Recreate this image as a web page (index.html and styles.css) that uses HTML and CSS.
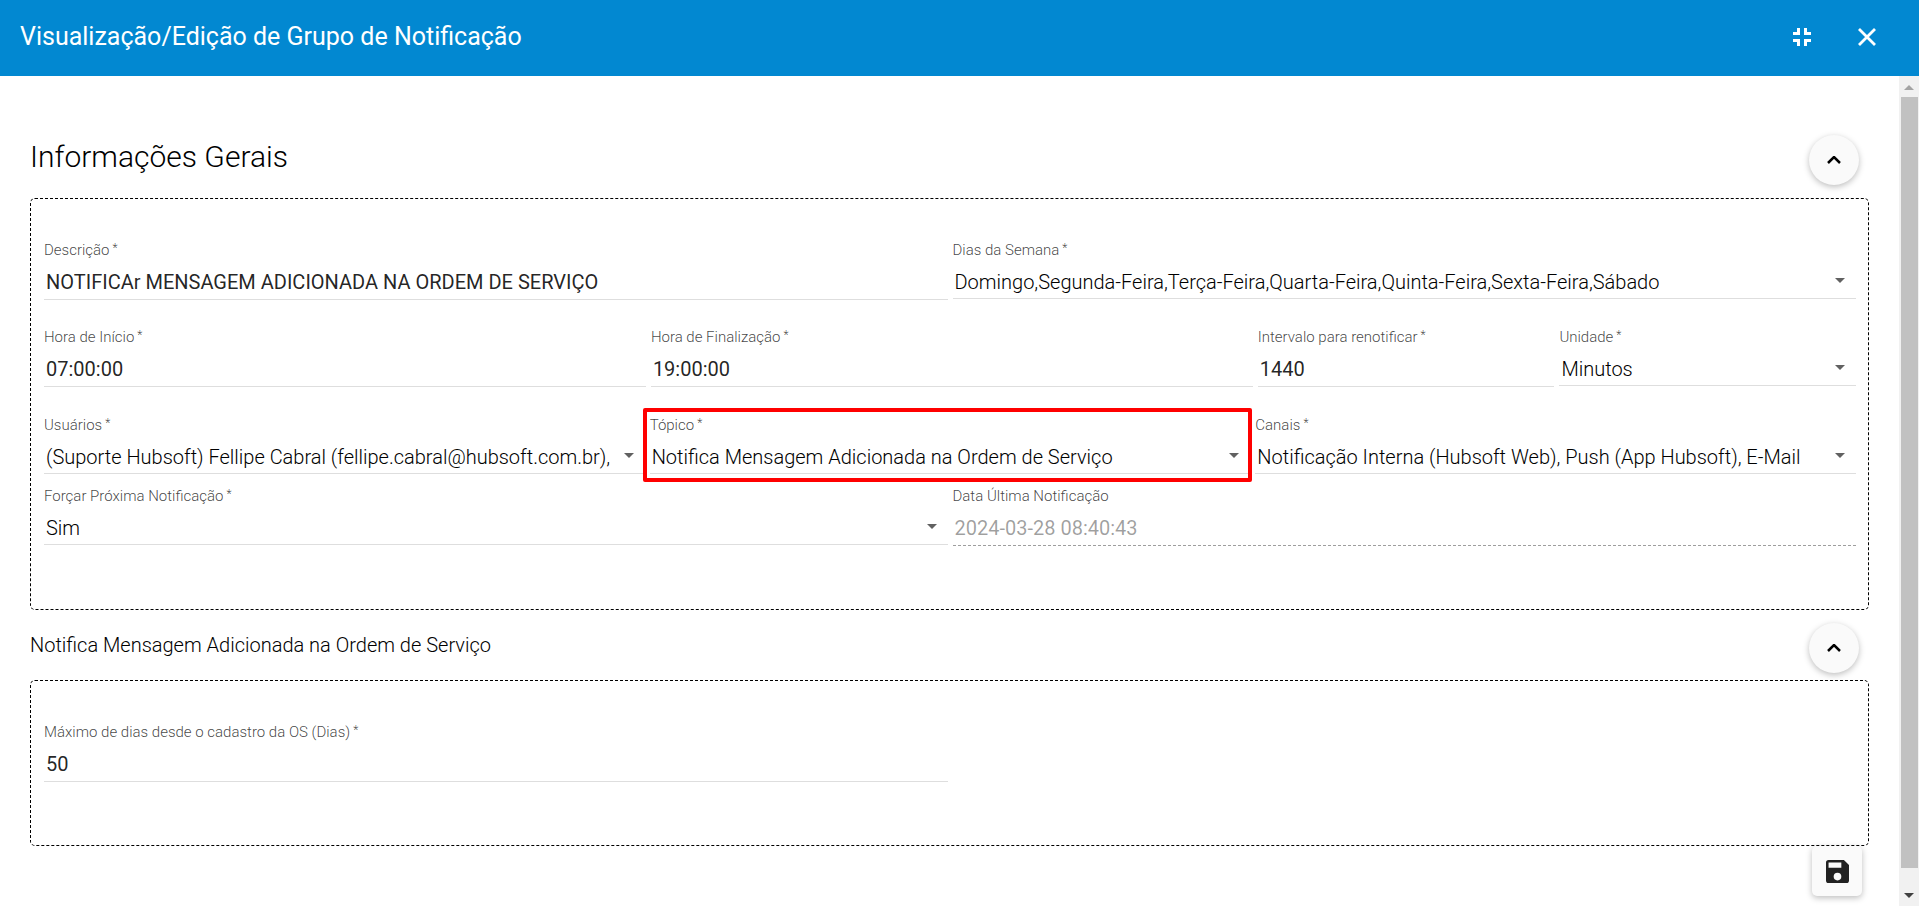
FILE: index.html
```html
<!DOCTYPE html>
<html lang="pt-BR">
<head>
    <meta charset="UTF-8">
    <meta name="viewport" content="width=device-width, initial-scale=1.0">
    <title>Visualização/Edição de Grupo de Notificação</title>

    <link rel="stylesheet" href="styles.css">
</head>
<body>
    <header class="toolbar">
        <h1 class="toolbar-title">Visualização/Edição de Grupo de Notificação</h1>
        <button type="button" class="icon-button" aria-label="Sair da tela cheia">
            <svg viewBox="0 0 18 18" width="18" height="18"><path d="M4 0h3v7H0V4h4zM11 0h3v4h4v3h-7zM0 11h7v7H4v-4H0zM11 11h7v3h-4v4h-3z" fill="#fff"/></svg>
        </button>
        <button type="button" class="icon-button" aria-label="Fechar">
            <svg viewBox="0 0 18 18" width="18" height="18"><path d="M1 1l16 16M17 1L1 17" stroke="#fff" stroke-width="2.8"/></svg>
        </button>
    </header>

    <div class="dialog">
        <form class="content">
            <div class="section-header">
                <h2 class="section-title large">Informações Gerais</h2>
                <button type="button" class="fab" aria-label="Recolher Informações Gerais">
                    <svg viewBox="0 0 14 8" width="14" height="8"><path d="M1 7l6-6 6 6" fill="none" stroke="#000" stroke-width="2.5"/></svg>
                </button>
            </div>

            <section class="panel">
                <div class="row halves">
                    <div class="field">
                        <label for="descricao">Descrição<sup>*</sup></label>
                        <input type="text" id="descricao" value="NOTIFICAr MENSAGEM ADICIONADA NA ORDEM DE SERVIÇO" required>
                    </div>
                    <div class="field">
                        <label for="dias">Dias da Semana<sup>*</sup></label>
                        <select id="dias"><option>Domingo,Segunda-Feira,Terça-Feira,Quarta-Feira,Quinta-Feira,Sexta-Feira,Sábado</option></select>
                    </div>
                </div>
                <div class="row hours">
                    <div class="field">
                        <label for="inicio">Hora de Início<sup>*</sup></label>
                        <input type="text" id="inicio" value="07:00:00" required>
                    </div>
                    <div class="field">
                        <label for="fim">Hora de Finalização<sup>*</sup></label>
                        <input type="text" id="fim" value="19:00:00" required>
                    </div>
                    <div class="field">
                        <label for="intervalo">Intervalo para renotificar<sup>*</sup></label>
                        <input type="text" id="intervalo" value="1440" required>
                    </div>
                    <div class="field">
                        <label for="unidade">Unidade<sup>*</sup></label>
                        <select id="unidade"><option>Minutos</option></select>
                    </div>
                </div>
                <div class="row thirds">
                    <div class="field">
                        <label for="usuarios">Usuários<sup>*</sup></label>
                        <select id="usuarios"><option>(Suporte Hubsoft) Fellipe Cabral (fellipe.cabral@hubsoft.com.br),</option></select>
                    </div>
                    <div class="field highlight">
                        <label for="topico">Tópico<sup>*</sup></label>
                        <select id="topico"><option>Notifica Mensagem Adicionada na Ordem de Serviço</option></select>
                    </div>
                    <div class="field">
                        <label for="canais">Canais<sup>*</sup></label>
                        <select id="canais"><option>Notificação Interna (Hubsoft Web), Push (App Hubsoft), E-Mail</option></select>
                    </div>
                </div>
                <div class="row halves">
                    <div class="field">
                        <label for="forcar">Forçar Próxima Notificação<sup>*</sup></label>
                        <select id="forcar"><option>Sim</option></select>
                    </div>
                    <div class="field">
                        <label for="ultima">Data Última Notificação</label>
                        <input type="text" id="ultima" value="2024-03-28 08:40:43" disabled>
                    </div>
                </div>
            </section>

            <div class="section-header compact">
                <h2 class="section-title">Notifica Mensagem Adicionada na Ordem de Serviço</h2>
                <button type="button" class="fab" aria-label="Recolher tópico">
                    <svg viewBox="0 0 14 8" width="14" height="8"><path d="M1 7l6-6 6 6" fill="none" stroke="#000" stroke-width="2.5"/></svg>
                </button>
            </div>

            <section class="panel">
                <div class="row halves">
                    <div class="field">
                        <label for="maximo">Máximo de dias desde o cadastro da OS (Dias)<sup>*</sup></label>
                        <input type="text" id="maximo" value="50" required>
                    </div>
                </div>
            </section>

            <div class="actions">
                <button type="submit" class="save-button" aria-label="Salvar">
                    <svg viewBox="3 3 18 18" width="23" height="23"><path d="M17 3H5a2 2 0 0 0-2 2v14a2 2 0 0 0 2 2h14a2 2 0 0 0 2-2V7zm-5 16a3 3 0 1 1 0-6 3 3 0 0 1 0 6zm3-10H5V5h10z" fill="#212121"/></svg>
                </button>
            </div>
        </form>

        <div class="scrollbar" aria-hidden="true">
            <svg viewBox="0 0 10 5" width="10" height="5"><path d="M0 5l5-5 5 5z" fill="#a3a3a3"/></svg>
            <div class="scrollbar-thumb"></div>
            <svg viewBox="0 0 10 5" width="10" height="5"><path d="M0 0l5 5 5-5z" fill="#404040"/></svg>
        </div>
    </div>
</body>
</html>
```

FILE: styles.css
```css
* {
    box-sizing: border-box;
}
body {
    margin: 0;
    height: 100vh;
    display: flex;
    flex-direction: column;
    font-family: Roboto, sans-serif;
    color: rgba(0, 0, 0, 0.87);
    background-color: #fff;
    overflow: hidden;
}
button {
    border: none;
    padding: 0;
    cursor: pointer;
    display: flex;
    align-items: center;
    justify-content: center;
}
.toolbar {
    flex: none;
    display: flex;
    align-items: center;
    height: 76px;
    padding: 0 27px 3px 20px;
    background-color: #0288d1;
    color: #fff;
}
.toolbar-title {
    flex: 1;
    margin: 0;
    font-size: 25px;
    font-weight: 400;
}
.icon-button {
    width: 50px;
    height: 50px;
    margin-left: 15px;
    background: none;
}
.dialog {
    flex: 1;
    min-height: 0;
    display: flex;
}
.content {
    flex: 1;
    min-width: 0;
    padding: 59px 30px 0;
    overflow: hidden;
}
.section-header {
    display: flex;
    align-items: center;
    justify-content: space-between;
    height: 50px;
    margin-bottom: 13px;
    padding-right: 10px;
}
.section-header.compact {
    margin: 13px 0 7px;
}
.section-title {
    margin: 0;
    padding-bottom: 6px;
    font-size: 20px;
    font-weight: 300;
    color: #000;
}
.section-title.large {
    padding-bottom: 8px;
    font-size: 30px;
}
.fab,
.save-button {
    width: 50px;
    height: 50px;
    border-radius: 50%;
    background-color: #fafafa;
    box-shadow: 0 2px 6px rgba(0, 0, 0, 0.26);
}
.save-button {
    border-radius: 5px;
}
.panel {
    border: 1px dashed #000;
    border-radius: 5px;
    padding: 41px 7px 63px 13px;
}
.row {
    display: grid;
}
.row + .row {
    margin-top: 27px;
}
.row + .thirds {
    margin-top: 28px;
}
.thirds + .row {
    margin-top: 12px;
}
.halves {
    grid-template-columns: 1fr 1fr;
}
.hours {
    grid-template-columns: 33.4% 33.4% 1fr 1fr;
}
.thirds {
    grid-template-columns: 1fr 1fr 1fr;
}
.field {
    position: relative;
    min-width: 0;
    margin-right: 5px;
    display: flex;
    flex-direction: column;
}
.field label {
    height: 20px;
    font-size: 15px;
    font-weight: 300;
    line-height: 20px;
    color: rgba(0, 0, 0, 0.74);
}
.field sup {
    margin-left: 3px;
    font-size: 12px;
    line-height: 0;
    vertical-align: 3px;
}
.field input,
.field select {
    width: 100%;
    height: 40px;
    padding: 4px 2px 0;
    border: none;
    border-bottom: 1px solid #dedede;
    border-radius: 0;
    background-color: transparent;
    font-family: inherit;
    font-size: 20px;
    color: rgba(0, 0, 0, 0.87);
}
.field select {
    appearance: none;
    height: 39px;
    padding: 6px 29px 0 2px;
    font-weight: 300;
    color: #000;
    background-image: url("data:image/svg+xml,%3Csvg xmlns='http://www.w3.org/2000/svg' width='10' height='5'%3E%3Cpath d='M0 0h10L5 5z' fill='%23616161'/%3E%3C/svg%3E");
    background-repeat: no-repeat;
    background-position: right 11px top 18px;
}
.field input:disabled {
    border-bottom: 1px dashed #9e9e9e;
    color: rgba(0, 0, 0, 0.38);
}
.highlight::after {
    content: '';
    position: absolute;
    inset: -7px -2px -8px -7px;
    border: 4px solid #f00;
    border-radius: 2px;
    pointer-events: none;
}
.actions {
    display: flex;
    justify-content: flex-end;
    padding-right: 7px;
}
.scrollbar {
    flex: none;
    width: 20px;
    display: flex;
    flex-direction: column;
    align-items: center;
    justify-content: space-between;
    gap: 7px;
    padding: 9px 0 8px;
    background-color: #f1f1f1;
}
.scrollbar-thumb {
    width: 17px;
    flex: 1;
    margin-bottom: 18px;
    background-color: #c1c1c1;
}
```
